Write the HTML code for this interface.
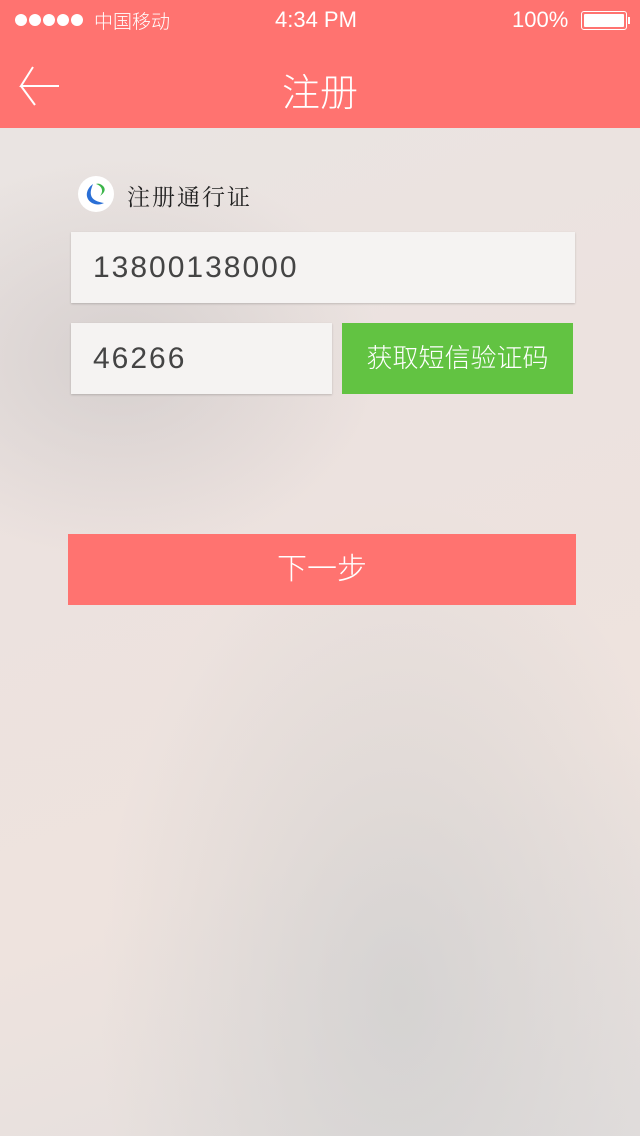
<!DOCTYPE html>
<html><head><meta charset="utf-8"><style>
*{margin:0;padding:0;box-sizing:border-box}
body{width:640px;height:1136px;overflow:hidden;font-family:"Liberation Sans","Noto Sans CJK SC",sans-serif;position:relative;
background:radial-gradient(ellipse 260px 200px at 120px 360px,rgba(200,195,195,.6),transparent),radial-gradient(ellipse 300px 500px at 400px 1000px,rgba(205,205,205,.7),transparent),linear-gradient(160deg,#e9e5e3 0%,#ece2df 40%,#eee3de 70%,#e2dedd 100%);}
.hdr{position:absolute;top:0;left:0;width:640px;height:128px;background:#ff7370;color:#fff}
.abs{position:absolute}
.dot{position:absolute;top:14px;width:12px;height:12px;border-radius:50%;background:#fff}
.field{position:absolute;background:#f5f3f2;box-shadow:0 1px 2px rgba(0,0,0,.18);color:#444;font-size:30px;letter-spacing:2px;padding-left:22px;line-height:71px;font-weight:300}
</style></head><body>
<div class="hdr">
<div class="dot" style="left:15px"></div><div class="dot" style="left:29px"></div><div class="dot" style="left:43px"></div><div class="dot" style="left:57px"></div><div class="dot" style="left:71px"></div>
<div class="abs" style="left:94px;top:7px;font-size:19px;font-weight:300">中国移动</div>
<div class="abs" style="left:275px;top:7px;font-size:22px">4:34 PM</div>
<div class="abs" style="left:512px;top:7px;font-size:22px">100%</div>
<div class="abs" style="left:581px;top:11px;width:46px;height:19px;border:1.5px solid #fff;border-radius:3px;padding:2px"><div style="background:#fff;width:100%;height:100%;border-radius:1px"></div></div>
<div class="abs" style="left:628px;top:17px;width:2px;height:7px;background:#fff"></div>
<svg class="abs" style="left:18px;top:64px" width="44" height="44"><path d="M15 3L3 22H41M3 22L17 41" stroke="#fff" stroke-width="2" fill="none"/></svg>
<div class="abs" style="left:0;width:640px;top:62px;text-align:center;font-size:38px;font-weight:300">注册</div>
</div>
<svg class="abs" style="left:78px;top:176px" width="36" height="36"><circle cx="18" cy="18" r="18" fill="#fff"/><path d="M15 8C8 13 6 22 14 27C18 29 22 29 26 27C20 26 14 24 13 19C12 15 14 11 15 8Z" fill="#2a6fd6"/><path d="M18 8C24 10 26 15 22 20C25 18 29 14 25 10C23 8 20 7 18 8Z" fill="#3cb54a"/></svg>
<div class="abs" style="left:127px;top:179px;font-size:23px;color:#222;letter-spacing:2px;font-family:'Liberation Serif','Noto Serif CJK SC',serif">注册通行证</div>
<div class="field" style="left:71px;top:232px;width:504px;height:71px">13800138000</div>
<div class="field" style="left:71px;top:323px;width:261px;height:71px">46266</div>
<div class="abs" style="left:342px;top:323px;width:231px;height:71px;background:#62c342;color:#fff;font-size:26px;line-height:71px;text-align:center;font-weight:300">获取短信验证码</div>
<div class="abs" style="left:68px;top:534px;width:508px;height:71px;background:#ff7370;color:#fff;font-size:30px;line-height:71px;text-align:center;font-weight:300">下一步</div>
</body></html>
